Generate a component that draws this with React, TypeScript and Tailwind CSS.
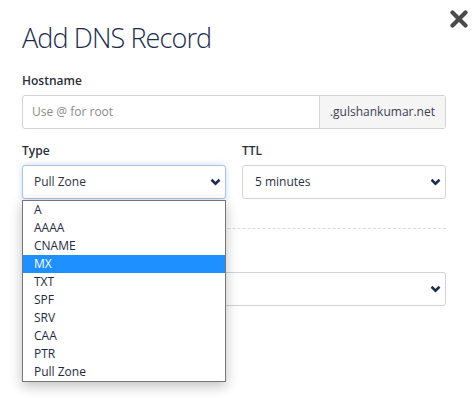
import React from "react";

const recordTypes = ["A", "AAAA", "CNAME", "MX", "TXT", "SPF", "SRV", "CAA", "PTR", "Pull Zone"];

function Chevron() {
    return (
        <svg width="11" height="8" viewBox="0 0 11 8" className="shrink-0">
            <polyline points="1.5,1.8 5.5,5.6 9.5,1.8" fill="none" stroke="#1f2d4d" strokeWidth="2.6" />
        </svg>
    );
}

function SelectBox({ value, focused }: { value: string; focused?: boolean }) {
    return (
        <div
            className={
                focused
                    ? "flex h-[34px] w-full items-center justify-between rounded-[3px] border border-[#a9c3e6] bg-white pl-[11px] pr-[4px] shadow-[0_0_6px_rgba(120,150,200,0.35)]"
                    : "flex h-[34px] w-full items-center justify-between rounded-[3px] border border-[#d3d3d3] bg-white pl-[12px] pr-[4px]"
            }
        >
            <span className="text-[12px] text-[#2b3242]">{value}</span>
            <Chevron />
        </div>
    );
}

export default function App() {
    return (
        <div
            className="relative h-[398px] w-[475px] overflow-hidden bg-white pl-[22px] pr-[29px] pt-[20px]"
            style={{ fontFamily: '"Open Sans", "Noto Sans", sans-serif' }}
        >
            {/* close */}
            <button className="absolute right-[7px] top-[10px] h-[18px] w-[18px]">
                <svg width="18" height="18" viewBox="0 0 18 18">
                    <path d="M2.5 2.5 L15.5 15.5 M15.5 2.5 L2.5 15.5" stroke="#4a4a4a" strokeWidth="4.2" strokeLinecap="round" />
                </svg>
            </button>

            <h1 className="text-[27px] font-light leading-[36px] tracking-[-0.9px] text-[#1c2c4c]">Add DNS Record</h1>

            <label className="mt-[16px] mb-[5px] block text-[12px] font-semibold leading-[18px] text-[#2a2f3a]">Hostname</label>
            <div className="flex h-[34px] rounded-[3px] border border-[#d3d3d3]">
                <div className="flex flex-1 items-center pl-[9px] text-[12px] text-[#8a8a8a]">Use @ for root</div>
                <div className="flex items-center border-l border-[#d8d8d8] bg-[#f5f5f5] px-[10px] text-[12px] text-[#3a4252]">
                    .gulshankumar.net
                </div>
            </div>

            <div className="mt-[13px] grid grid-cols-2 gap-[16px]">
                <div className="relative">
                    <label className="mb-[5px] block text-[12px] font-semibold leading-[18px] text-[#2a2f3a]">Type</label>
                    <SelectBox value="Pull Zone" focused />
                    <ul className="absolute left-0 top-[58px] z-10 w-full border border-[#767676] bg-white shadow-[0_4px_12px_rgba(0,0,0,0.25)]">
                        {recordTypes.map((t) => (
                            <li
                                key={t}
                                className={
                                    t === "MX"
                                        ? "h-[18px] bg-[#1e90ff] pl-[11px] text-[12px] leading-[18px] text-white"
                                        : "h-[18px] pl-[11px] text-[12px] leading-[18px] text-[#1f2a44]"
                                }
                            >
                                {t}
                            </li>
                        ))}
                    </ul>
                </div>
                <div>
                    <label className="mb-[5px] block text-[12px] font-semibold leading-[18px] text-[#2a2f3a]">TTL</label>
                    <SelectBox value="5 minutes" />
                </div>
            </div>

            <div className="mt-[29px] border-t border-dashed border-[#dcdcdc]" />

            {/* label of this field sits under the open list */}
            <div className="mt-[20px] mb-[5px] h-[18px]" />
            <SelectBox value="" />
        </div>
    );
}
